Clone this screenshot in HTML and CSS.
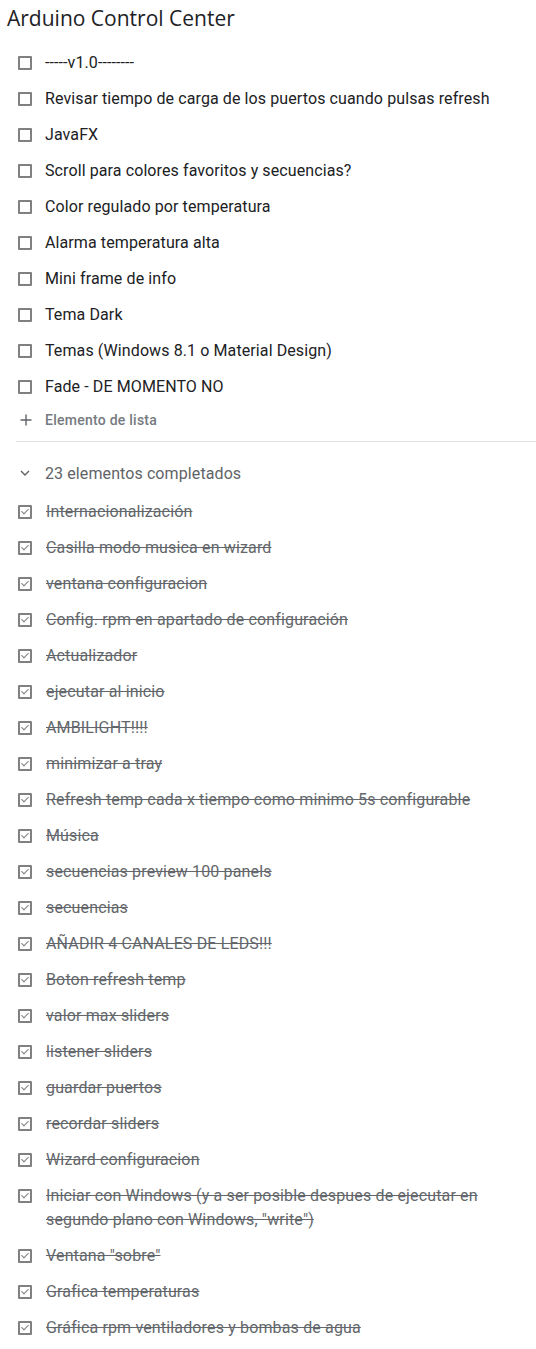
FILE: index.html
```html
<!DOCTYPE html>
<html lang="es">
<head>
<meta charset="utf-8">
<title>Arduino Control Center</title>
<link rel="stylesheet" href="styles.css">
</head>
<body>
<div class="note">
  <h1 class="title">Arduino Control Center</h1>
  <ul class="list">
    <li class="item"><span class="box"></span><span class="text">-----v1.0--------</span></li>
    <li class="item"><span class="box"></span><span class="text">Revisar tiempo de carga de los puertos cuando pulsas refresh</span></li>
    <li class="item"><span class="box"></span><span class="text">JavaFX</span></li>
    <li class="item"><span class="box"></span><span class="text">Scroll para colores favoritos y secuencias?</span></li>
    <li class="item"><span class="box"></span><span class="text">Color regulado por temperatura</span></li>
    <li class="item"><span class="box"></span><span class="text">Alarma temperatura alta</span></li>
    <li class="item"><span class="box"></span><span class="text">Mini frame de info</span></li>
    <li class="item"><span class="box"></span><span class="text">Tema Dark</span></li>
    <li class="item"><span class="box"></span><span class="text">Temas (Windows 8.1 o Material Design)</span></li>
    <li class="item"><span class="box"></span><span class="text">Fade - DE MOMENTO NO</span></li>
  </ul>
  <div class="add">
    <svg class="add-icon" width="12" height="12" viewBox="0 0 12 12"><path d="M6 0.5v11M0.5 6h11" stroke="#5f6368" stroke-width="1.4" fill="none"/></svg>
    <span class="add-text">Elemento de lista</span>
  </div>
  <div class="divider"></div>
  <div class="done-head">
    <svg class="chev" width="10" height="6" viewBox="0 0 10 6"><path d="M1 1l4 4 4-4" stroke="#5f6368" stroke-width="1.4" fill="none"/></svg>
    <span class="done-text">23 elementos completados</span>
  </div>
  <ul class="list done">
    <li class="item"><span class="box checked"></span><span class="text">Internacionalización</span></li>
    <li class="item"><span class="box checked"></span><span class="text">Casilla modo musica en wizard</span></li>
    <li class="item"><span class="box checked"></span><span class="text">ventana configuracion </span></li>
    <li class="item"><span class="box checked"></span><span class="text">Config. rpm en apartado de configuración</span></li>
    <li class="item"><span class="box checked"></span><span class="text">Actualizador</span></li>
    <li class="item"><span class="box checked"></span><span class="text">ejecutar al inicio</span></li>
    <li class="item"><span class="box checked"></span><span class="text">AMBILIGHT!!!!</span></li>
    <li class="item"><span class="box checked"></span><span class="text">minimizar a tray</span></li>
    <li class="item"><span class="box checked"></span><span class="text">Refresh temp cada x tiempo como minimo 5s configurable</span></li>
    <li class="item"><span class="box checked"></span><span class="text">Música</span></li>
    <li class="item"><span class="box checked"></span><span class="text">secuencias preview 100 panels</span></li>
    <li class="item"><span class="box checked"></span><span class="text">secuencias</span></li>
    <li class="item"><span class="box checked"></span><span class="text">AÑADIR 4 CANALES DE LEDS!!!</span></li>
    <li class="item"><span class="box checked"></span><span class="text">Boton refresh temp</span></li>
    <li class="item"><span class="box checked"></span><span class="text">valor max sliders</span></li>
    <li class="item"><span class="box checked"></span><span class="text">listener sliders</span></li>
    <li class="item"><span class="box checked"></span><span class="text">guardar puertos</span></li>
    <li class="item"><span class="box checked"></span><span class="text">recordar sliders</span></li>
    <li class="item"><span class="box checked"></span><span class="text">Wizard configuracion</span></li>
    <li class="item"><span class="box checked"></span><span class="text">Iniciar con Windows (y a ser posible despues de ejecutar en segundo plano con Windows, "write")</span></li>
    <li class="item"><span class="box checked"></span><span class="text">Ventana "sobre"</span></li>
    <li class="item"><span class="box checked"></span><span class="text">Grafica temperaturas</span></li>
    <li class="item"><span class="box checked"></span><span class="text">Gráfica rpm ventiladores y bombas de agua</span></li>
  </ul>
</div>
</body>
</html>
```
FILE: styles.css
```css
* { box-sizing: border-box; }
html, body { margin: 0; padding: 0; background: #fff; }
body { font-family: Roboto, "Liberation Sans", sans-serif; color: #202124; }

.title {
  margin: 0;
  height: 45px;
  padding: 4px 0 0 7px;
  font-family: "Open Sans", "Noto Sans", sans-serif;
  font-weight: 400;
  font-size: 21px;
  line-height: 28px;
  color: #202124;
}

.list { list-style: none; margin: 0; padding: 0; }

.item {
  display: flex;
  align-items: flex-start;
  padding: 6px 26px 6px 18px;
  min-height: 36px;
}

.box {
  flex: none;
  width: 14px;
  height: 14px;
  margin-top: 5px;
  margin-right: 13px;
  border: 2px solid #808080;
  border-radius: 1px;
  position: relative;
}

.box.checked::after {
  content: "";
  position: absolute;
  left: 3px;
  top: 0px;
  width: 3px;
  height: 6px;
  border-right: 1.5px solid #808080;
  border-bottom: 1.5px solid #808080;
  transform: rotate(45deg);
}

.text {
  font-size: 16px;
  line-height: 24px;
  letter-spacing: 0.1px;
  color: #202124;
}

.done .text {
  color: #63676b;
  text-decoration: line-through;
  letter-spacing: 0.15px;
}

.done .box { margin-right: 14px; }

.add {
  display: flex;
  align-items: center;
  height: 30px;
  padding-left: 20px;
}

.add-icon { flex: none; margin-right: 13px; }

.add-text {
  font-size: 14px;
  font-weight: 500;
  letter-spacing: 0.25px;
  color: #757a7f;
}

.divider {
  height: 1px;
  background: #e0e0e0;
  margin: 6px 0 12px 16px;
}

.done-head {
  display: flex;
  align-items: center;
  height: 38px;
  padding-left: 20px;
  margin-bottom: 2px;
}

.chev { flex: none; margin-right: 15px; }

.done-text {
  font-size: 16px;
  letter-spacing: 0.1px;
  color: #5f6368;
}
```
